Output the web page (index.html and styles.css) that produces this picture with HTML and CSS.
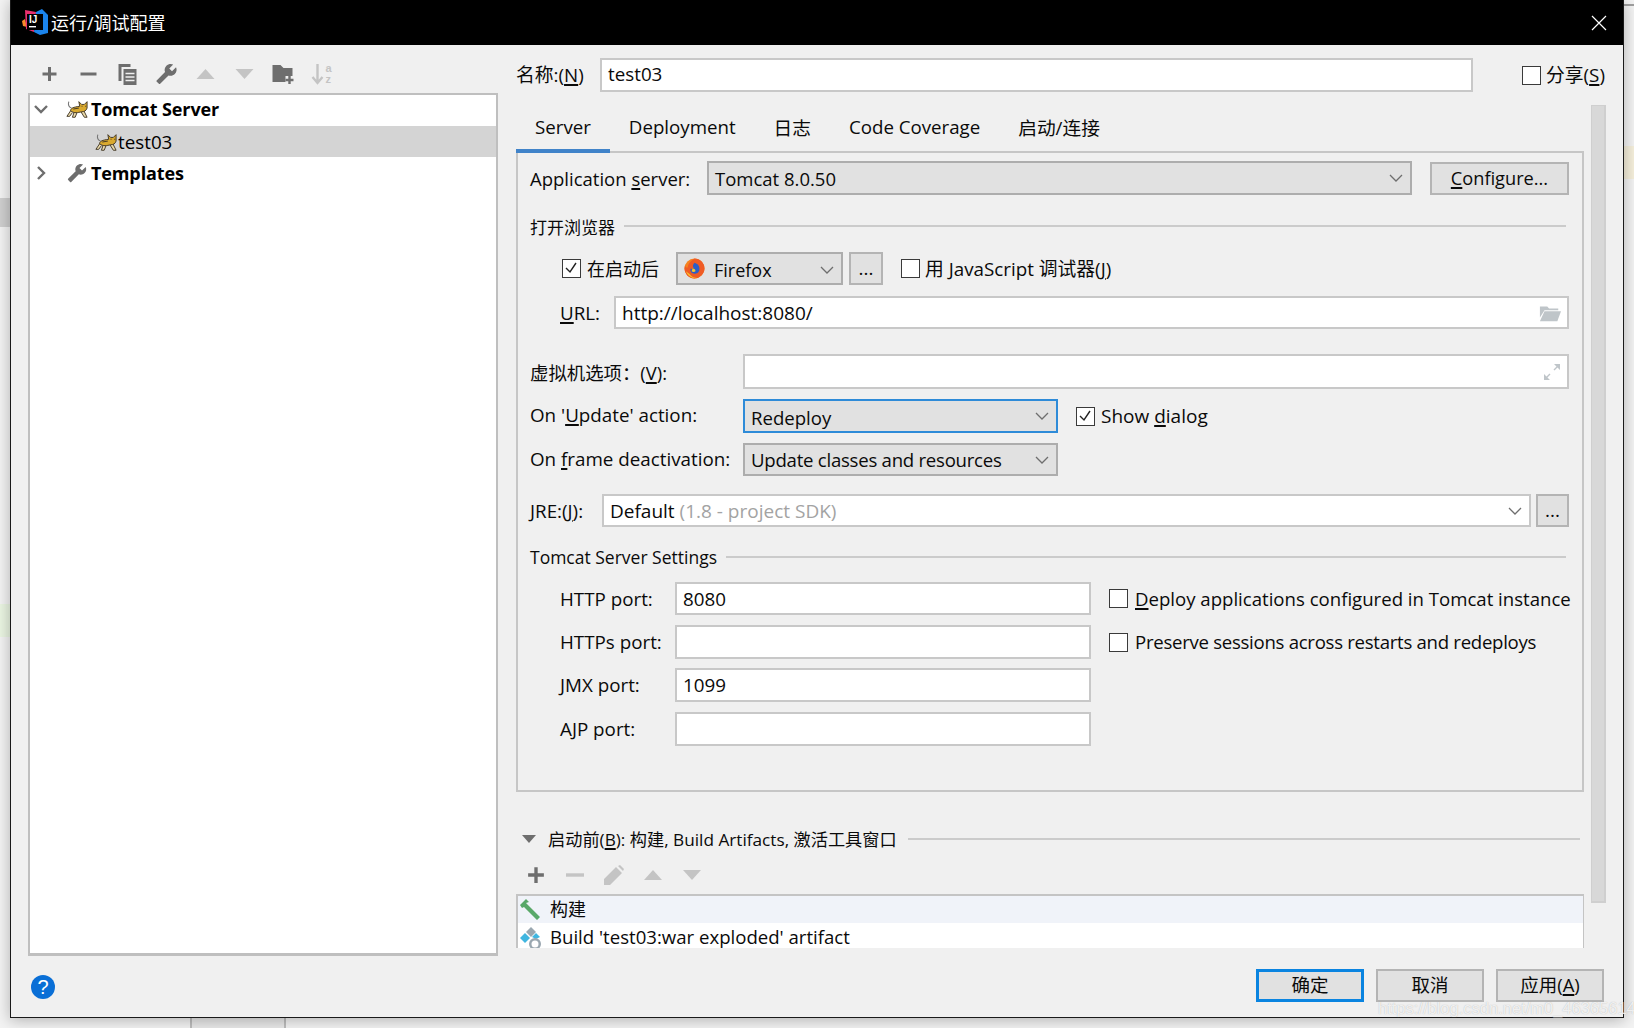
FILE: index.html
```html
<!DOCTYPE html>
<html lang="zh">
<head>
<meta charset="utf-8">
<title>运行/调试配置</title>
<link rel="stylesheet" href="styles.css">
</head>
<body>
<svg class="defs" width="0" height="0" aria-hidden="true">
  <defs>
    <symbol id="wrench" viewBox="0 0 24 24"><g transform="translate(24 0) scale(-1 1)"><path d="M22.7 19l-9.1-9.1c.9-2.3.4-5-1.5-6.9-2-2-5-2.4-7.4-1.3L9 6 6 9 1.6 4.7C.4 7.1.9 10.1 2.9 12.1c1.9 1.9 4.6 2.4 6.9 1.5l9.1 9.1c.4.4 1 .4 1.4 0l2.3-2.3c.5-.4.5-1.1.1-1.4z"/></g></symbol>
    <symbol id="tomcat" viewBox="0 0 24 20">
      <path d="M6 9C3 8 2 6 3 2" fill="none" stroke="#777" stroke-width="1.2"/>
      <path d="M5 12L1 18h3l3-4M9 13l-2 6h3l2-5" fill="#e9d9a8" stroke="#3d3222" stroke-width="1"/>
      <path d="M15 11l5 8h3l-4-8z" fill="#e9d9a8" stroke="#3d3222" stroke-width="1"/>
      <path d="M5 12c0-3 3-4 10-5l-1-5 3 3h3l3-3v7c-1 3-3 4-6 4-4 1-8 2-12-1z" fill="#d9a92e" stroke="#3d3222" stroke-width="1"/>
      <path d="M17 7h1M21 7h1M8 10l6-1" fill="none" stroke="#3d3222" stroke-width="1"/>
    </symbol>
  </defs>
</svg>

<div class="backdrop">
  <span class="bit bit-gray"></span>
  <span class="bit bit-green"></span>
  <span class="bit bit-yellow"></span>
  <span class="bit bit-line"></span>
  <span class="bit bit-tab"></span>
</div>

<main class="dialog">
  <header class="titlebar">
    <svg class="logo" viewBox="0 0 26 26" width="26" height="26">
      <path d="M0 12l3-2 2 8-4-1z" fill="#f98b2b"/>
      <path d="M3 1l11 2-2 20-8-3z" fill="#e8306f"/>
      <path d="M14 3l6-3 6 6v18l-8 2-6-3z" fill="#1b84ec"/>
      <rect x="5" y="5" width="16" height="16" fill="#000"/>
      <text x="7" y="14" class="logo-text">IJ</text>
      <rect x="7" y="17" width="7" height="1.4" fill="#fff"/>
    </svg>
    <span class="title">运行/调试配置</span>
    <svg class="close" viewBox="0 0 16 16" width="16" height="16"><path d="M1 1l14 14M15 1L1 15" stroke="#fff" stroke-width="1.2" fill="none"/></svg>
  </header>

  <div class="content">
    <aside class="sidebar">
      <div class="toolbar">
        <svg class="tool" viewBox="-3 -3 22 22"><path d="M8 1v14M1 8h14" stroke="#6e6e6e" stroke-width="3"/></svg>
        <svg class="tool" viewBox="-3 -3 22 22"><path d="M0 8h16" stroke="#6e6e6e" stroke-width="3"/></svg>
        <svg class="tool" viewBox="-1 -1 22 22"><path d="M1 0h12v3H4v14H1z" fill="#6e6e6e"/><path d="M6 5h13v16H6z" fill="#6e6e6e"/><path d="M8 9.5h9M8 13h9M8 16.5h9" stroke="#f0f0f0" stroke-width="1.5"/></svg>
        <svg class="tool" viewBox="0 0 24 24" fill="#6e6e6e"><use href="#wrench"/></svg>
        <svg class="tool" viewBox="-2 -6 22 22"><path d="M9 0l9 10H0z" fill="#c4c4c4"/></svg>
        <svg class="tool" viewBox="-2 -6 22 22"><path d="M0 0h18L9 10z" fill="#c4c4c4"/></svg>
        <svg class="tool" viewBox="0 0 22 22"><path d="M0 2h8l3 3h9v8h-7v6H0z" fill="#6e6e6e"/><path d="M17 13v8M13 17h8" stroke="#6e6e6e" stroke-width="2.4"/></svg>
        <svg class="tool" viewBox="0 0 22 22"><path d="M6 1v17M1 14l5 6 5-6" fill="none" stroke="#c4c4c4" stroke-width="2.4"/><text x="14" y="9" class="az">a</text><text x="14" y="20" class="az">z</text></svg>
      </div>
      <div class="tree">
        <div class="node node-top node-first">
          <svg class="twisty" viewBox="0 0 14 10"><path d="M1 2l6 6 6-6" fill="none" stroke="#6e6e6e" stroke-width="2.4"/></svg>
          <svg class="cat" viewBox="0 0 24 20"><use href="#tomcat"/></svg>
          <strong>Tomcat Server</strong>
        </div>
        <div class="node node-child">
          <svg class="cat" viewBox="0 0 24 20"><use href="#tomcat"/></svg>
          <span>test03</span>
        </div>
        <div class="node node-top">
          <svg class="twisty" viewBox="0 0 14 14"><path d="M4 1l6 6-6 6" fill="none" stroke="#6e6e6e" stroke-width="2.4"/></svg>
          <svg class="cat" viewBox="0 0 24 24" fill="#6e6e6e"><use href="#wrench"/></svg>
          <strong>Templates</strong>
        </div>
      </div>
    </aside>

    <section class="main">
      <div class="name-row">
        <label class="name-label">名称:(<u>N</u>)</label>
        <div class="field name-field"><span>test03</span></div>
        <span class="check share-check"></span>
        <span class="share-text">分享(<u>S</u>)</span>
      </div>

      <div class="scroll-wrap">
        <div class="scroll-body">
          <nav class="tabs">
            <span class="tab tab-active">Server</span>
            <span class="tab">Deployment</span>
            <span class="tab">日志</span>
            <span class="tab">Code Coverage</span>
            <span class="tab">启动/连接</span>
          </nav>

          <div class="panel">
            <div class="row row-appserver">
              <span class="lbl lbl-appserver">Application <u>s</u>erver:</span>
              <div class="combo combo-appserver"><span>Tomcat 8.0.50</span><svg class="chev" viewBox="0 0 14 8"><path d="M1 1l6 6 6-6" fill="none" stroke="#6e6e6e" stroke-width="1.3"/></svg></div>
              <div class="btn btn-config"><span><u>C</u>onfigure...</span></div>
            </div>

            <div class="group group-browser"><span>打开浏览器</span><i></i></div>

            <div class="row row-browser">
              <span class="check check-on first-check"><svg viewBox="0 0 16 16"><path d="M3 8l4 4 6-9" fill="none" stroke="#222" stroke-width="1.4"/></svg></span>
              <span class="after-start">在启动后</span>
              <div class="combo combo-browser">
                <svg class="firefox" viewBox="0 0 22 22"><circle cx="11" cy="11" r="10.5" fill="#f5821f"/><path d="M11 .5A10.5 10.5 0 0 1 21 14c-2 5-6 7.5-10 7.5A10.5 10.5 0 0 1 1 8c1 2 2 2 3 2 0-4 3-7 7-9.5z" fill="#ef5b25"/><path d="M11 5c3 1 6 3 5 8-1 3-4 4-7 3-2-1-3-3-2-5 2 1 3 0 3-1-1-1-1-3 1-5z" fill="#2b5ec8"/><path d="M2 14c2 5 7 8 12 7-3 0-6-1-8-4z" fill="#f9c52b"/><path d="M9 11c2 0 3 1 3 3-1 1-3 1-4 0z" fill="#f9c52b"/></svg>
                <span>Firefox</span>
                <svg class="chev" viewBox="0 0 14 8"><path d="M1 1l6 6 6-6" fill="none" stroke="#6e6e6e" stroke-width="1.3"/></svg>
              </div>
              <div class="btn btn-dots btn-browser-dots"><span>...</span></div>
              <span class="check js-check"></span>
              <span class="js-text">用 JavaScript 调试器(<u>J</u>)</span>
            </div>

            <div class="row row-url">
              <span class="lbl lbl-url"><u>U</u>RL:</span>
              <div class="field field-url"><span>http://localhost:8080/</span>
                <svg class="folder" viewBox="0 0 24 18"><path d="M1 2h8l2 2h10v2H6L1 14z" fill="#bfc5c9"/><path d="M6 7h18l-4 11H1z" fill="#bfc5c9"/></svg>
              </div>
            </div>

            <div class="row row-vm">
              <span class="lbl lbl-form lbl-vm">虚拟机选项：(<u>V</u>):</span>
              <div class="field field-vm">
                <svg class="expand" viewBox="0 0 18 18"><path d="M11 1h6v6zM1 11v6h6z" fill="#bfc5c9"/><path d="M15 3l-4 4M3 15l4-4" stroke="#bfc5c9" stroke-width="1.4"/></svg>
              </div>
            </div>

            <div class="row row-update">
              <span class="lbl lbl-form lbl-raise">On '<u>U</u>pdate' action:</span>
              <div class="combo combo-action combo-focus"><span class="combo-low">Redeploy</span><svg class="chev" viewBox="0 0 14 8"><path d="M1 1l6 6 6-6" fill="none" stroke="#6e6e6e" stroke-width="1.3"/></svg></div>
              <span class="check check-on dialog-check"><svg viewBox="0 0 16 16"><path d="M3 8l4 4 6-9" fill="none" stroke="#222" stroke-width="1.4"/></svg></span>
              <span class="dialog-text">Show <u>d</u>ialog</span>
            </div>

            <div class="row row-frame">
              <span class="lbl lbl-form lbl-raise">On <u>f</u>rame deactivation:</span>
              <div class="combo combo-action"><span class="combo-tight">Update classes and resources</span><svg class="chev" viewBox="0 0 14 8"><path d="M1 1l6 6 6-6" fill="none" stroke="#6e6e6e" stroke-width="1.3"/></svg></div>
            </div>

            <div class="row row-jre">
              <span class="lbl lbl-jre">JRE:(<u>J</u>):</span>
              <div class="field field-jre"><span>Default <em>(1.8 - project SDK)</em></span><svg class="chev" viewBox="0 0 14 8"><path d="M1 1l6 6 6-6" fill="none" stroke="#6e6e6e" stroke-width="1.3"/></svg></div>
              <div class="btn btn-dots btn-jre-dots"><span>...</span></div>
            </div>

            <div class="group group-tomcat"><span>Tomcat Server Settings</span><i></i></div>

            <div class="row row-port row-port-1">
              <span class="lbl lbl-port">HTTP port:</span>
              <div class="field field-port"><span>8080</span></div>
              <span class="check port-check"></span>
              <span class="port-text"><u>D</u>eploy applications configured in Tomcat instance</span>
            </div>
            <div class="row row-port row-port-2">
              <span class="lbl lbl-port">HTTPs port:</span>
              <div class="field field-port"></div>
              <span class="check port-check"></span>
              <span class="port-text port-text-tight">Preserve sessions across restarts and redeploys</span>
            </div>
            <div class="row row-port row-port-3">
              <span class="lbl lbl-port">JMX port:</span>
              <div class="field field-port"><span>1099</span></div>
            </div>
            <div class="row row-port row-port-4">
              <span class="lbl lbl-port">AJP port:</span>
              <div class="field field-port"></div>
            </div>
          </div>

          <div class="before-head">
            <svg class="before-tri" viewBox="0 0 14 8"><path d="M0 0h14L7 8z" fill="#6e6e6e"/></svg>
            <span>启动前(<u>B</u>): 构建, Build Artifacts, 激活工具窗口</span><i></i>
          </div>
          <div class="before-tools">
            <svg class="tool" viewBox="0 0 16 16"><path d="M8 1v14M1 8h14" stroke="#6e6e6e" stroke-width="3"/></svg>
            <svg class="tool" viewBox="0 0 16 16"><path d="M0 8h16" stroke="#c4c4c4" stroke-width="3"/></svg>
            <svg class="tool tool-pencil" viewBox="0 0 20 20"><path d="M0 20v-6L12 2l6 6L6 20zM14 1l2-1 4 4-1 2z" fill="#c4c4c4"/></svg>
            <svg class="tool" viewBox="0 0 18 10"><path d="M9 0l9 10H0z" fill="#c4c4c4"/></svg>
            <svg class="tool" viewBox="0 0 18 10"><path d="M0 0h18L9 10z" fill="#c4c4c4"/></svg>
          </div>
          <div class="task-list">
            <div class="task task-first">
              <svg class="task-icon" viewBox="0 0 22 22"><path d="M0 6l6-6 3 3-3 1 14 14-3 3L4 8 2 9z" fill="#59a869"/></svg>
              <span class="task-cjk">构建</span>
            </div>
            <div class="task">
              <svg class="task-icon task-clip" viewBox="0 0 22 24"><path d="M11 0l5 5-5 5-5-5z" fill="#9aa7b0"/><path d="M5 6l5 5-5 5-5-5z" fill="#40b6e0"/><path d="M16 6l4 4-4 2-4-2z" fill="#40b6e0"/><circle cx="15" cy="17" r="6" fill="#9aa7b0"/><circle cx="15" cy="17" r="3.5" fill="#fff"/></svg>
              <span>Build 'test03:war exploded' artifact</span>
            </div>
          </div>
        </div>
        <div class="scrollbar"></div>
      </div>
    </section>
  </div>

  <footer class="footer">
    <span class="help">?</span>
    <div class="actions">
      <div class="btn btn-act btn-ok"><span>确定</span></div>
      <div class="btn btn-act"><span>取消</span></div>
      <div class="btn btn-act"><span>应用(<u>A</u>)</span></div>
    </div>
  </footer>
</main>
<span class="watermark">https://blog.csdn.net/m0_46365614</span>
</body>
</html>
```
FILE: styles.css
```css
* { box-sizing: border-box; }
html, body { margin: 0; height: 100%; }
body {
  width: 1634px;
  height: 1028px;
  position: relative;
  overflow: hidden;
  background: #f3f3f3;
  color: #0a0a0a;
  font-family: "Open Sans", "Noto Sans CJK SC", sans-serif;
  font-size: 18.8px;
}
u { text-underline-offset: 2px; text-decoration-thickness: 1.5px; }
em { font-style: normal; color: #a3a3a3; }
.defs { position: absolute; }

/* what shows behind the dialog */
.bit { position: absolute; }
.bit-gray { left: 0; top: 198px; width: 10px; height: 29px; background: #cfcfcf; }
.bit-green { left: 0; top: 604px; width: 10px; height: 33px; background: #eaf5e2; }
.bit-yellow { left: 1624px; top: 146px; width: 10px; height: 33px; background: #f5efdb; }
.bit-line { left: 1624px; top: 4px; width: 10px; height: 2px; background: #a0a0a0; }
.bit-tab { left: 190px; top: 1018px; width: 96px; height: 10px; background: #e8e8e8; border-left: 2px solid #bdbdbd; border-right: 2px solid #bdbdbd; }

.dialog {
  position: absolute;
  left: 10px;
  top: 0;
  width: 1614px;
  height: 1018px;
  background: #f0f0f0;
  border: 1px solid #1a1a1a;
  border-top: 0;
  box-shadow: 0 2px 14px rgba(0, 0, 0, .28);
  display: flex;
  flex-direction: column;
}

.titlebar {
  height: 45px;
  flex: none;
  background: #000;
  color: #fff;
  display: flex;
  align-items: center;
  padding: 0 16px 0 11px;
  font-size: 18px;
}
.logo { flex: none; margin-top: -1px; }
.logo-text { font: bold 10px "Liberation Sans", sans-serif; fill: #fff; }
.title { margin-left: 3px; padding-bottom: 2px; }
.close { margin-left: auto; }

.content { display: flex; flex: 1; min-height: 0; }
.sidebar { width: 487px; flex: none; padding-left: 17px; }
.tool { width: 18px; height: 18px; flex: none; }
.toolbar { height: 48px; display: flex; align-items: center; padding: 10px 0 0 2px; }
.toolbar .tool { width: 39px; height: 22px; }
.az { font: bold 11px "Liberation Sans", sans-serif; fill: #c4c4c4; }

.tree {
  width: 470px;
  height: 863px;
  background: #fff;
  border: 2px solid #bfbfbf;
  border-bottom-width: 3px;
}
.node { height: 31px; display: flex; align-items: center; color: #000; }
.node-first { padding-bottom: 3px; }
.node-child { background: #d4d4d4; padding-left: 65px; }
.node-child span { margin-left: 1px; }
.node strong { font-weight: 700; font-size: 18px; letter-spacing: -.12px; }
.twisty { width: 14px; height: 14px; flex: none; margin-left: 4px; }
.node-top .cat { width: 22px; height: 20px; flex: none; margin-left: 18px; margin-right: 3px; }
.node-child .cat { width: 22px; height: 20px; flex: none; }

.main { flex: 1; min-width: 0; padding-left: 18px; }
.name-row { height: 34px; margin-top: 13px; display: flex; align-items: center; }
.name-row > label, .name-row > .share-text, .name-field span { padding-bottom: 2px; }
.name-label { width: 84px; flex: none; }
.field {
  background: #fff;
  border: 2px solid #c8c8c8;
  display: flex;
  align-items: center;
  padding-left: 6px;
  flex: none;
}
.name-field { width: 873px; height: 34px; }
.check {
  width: 19px;
  height: 19px;
  border: 1.5px solid #3a3a3a;
  background: #fff;
  flex: none;
  display: block;
}
.check svg { display: block; width: 16px; height: 16px; }
.share-check { margin-left: 49px; }
.share-text { margin-left: 5px; }

.scroll-wrap { display: flex; height: 842px; }
.scroll-body { width: 1068px; flex: none; }
.scrollbar {
  width: 15px;
  height: 798px;
  margin: 13px 0 0 7px;
  background: #d8d8d8;
  border: 1px solid #cfcfcf;
  border-right-width: 2px;
  border-bottom-width: 2px;
  flex: none;
}

.tabs { height: 47px; margin-top: 14px; margin-bottom: -2px; display: flex; position: relative; font-size: 18.7px; }
.tab { padding: 0 19px 6px; display: flex; align-items: center; height: 47px; }
.tab-active { border-bottom: 4px solid #4083c9; padding-bottom: 2px; }

.panel {
  height: 641px;
  border: 2px solid #c6c6c6;
  padding: 8px 13px 0 12px;
}
.row { display: flex; align-items: center; }
.lbl { flex: none; }
.combo {
  display: flex;
  align-items: center;
  background: #e1e1e1;
  border: 2px solid #adadad;
  padding-left: 6px;
  flex: none;
}
.chev { width: 14px; height: 8px; margin-left: auto; margin-right: 7px; flex: none; }
.btn {
  background: #e1e1e1;
  border: 2px solid #b4b4b4;
  display: flex;
  align-items: center;
  justify-content: center;
  flex: none;
}

.row-appserver { height: 34px; }
.lbl-appserver { width: 177px; font-size: 18.5px; }
.combo-appserver { width: 705px; height: 34px; font-size: 18.5px; }
.btn-config { width: 139px; height: 33px; margin-left: 18px; font-size: 18.2px; }

.group { display: flex; align-items: center; height: 20px; font-size: 17px; }
.group i { flex: 1; height: 2px; background: #cbcbcb; margin-left: 9px; margin-right: 3px; }
.group-browser { margin-top: 21px; }
.group-tomcat { margin-top: 20px; font-size: 17.5px; }

.row-browser { height: 33px; margin-top: 16px; }
.first-check { margin-left: 32px; }
.after-start { margin-left: 6px; width: 89px; flex: none; font-size: 18px; padding-bottom: 2px; }
.combo-browser { width: 167px; height: 33px; font-size: 18px; padding-top: 2px; }
.firefox { width: 21px; height: 21px; margin: -2px 9px 0 0; flex: none; }
.btn-dots { height: 33px; padding-bottom: 2px; }
.btn-browser-dots { width: 34px; margin-left: 6px; }
.js-check { margin-left: 18px; }
.js-text { margin-left: 5px; font-size: 18.8px; padding-bottom: 2px; }

.row-url { height: 33px; margin-top: 11px; }
.lbl-url { width: 54px; margin-left: 30px; }
.field-url { width: 955px; height: 33px; font-size: 19px; }
.folder { width: 22px; height: 18px; margin-left: auto; margin-right: 6px; flex: none; }

.row-vm { height: 35px; margin-top: 25px; }
.lbl-form { width: 213px; }
.lbl-vm { font-size: 18.4px; }
.lbl-raise { padding-bottom: 2px; }
.field-vm { width: 826px; height: 35px; }
.expand { width: 18px; height: 18px; margin-left: auto; margin-right: 6px; }

.row-update { height: 34px; margin-top: 10px; }
.row-frame { height: 33px; margin-top: 10px; }
.combo-action { width: 315px; height: 100%; font-size: 18.6px; }
.combo-low { padding-top: 3px; }
.combo-tight { letter-spacing: -.25px; }
.combo-focus { border-color: #2e8bd8; }
.dialog-check { margin-left: 18px; }
.dialog-text { margin-left: 6px; font-size: 19px; }

.row-jre { height: 33px; margin-top: 18px; }
.lbl-jre { width: 72px; }
.field-jre { width: 929px; height: 33px; font-size: 19px; }
.btn-jre-dots { width: 33px; margin-left: 5px; }

.row-port { height: 33px; }
.row-port-1 { margin-top: 15px; }
.row-port-2 { margin-top: 10px; height: 34px; }
.row-port-3 { margin-top: 9px; height: 34px; }
.row-port-4 { margin-top: 10px; height: 34px; }
.lbl-port { width: 115px; margin-left: 30px; }
.field-port { width: 416px; height: 100%; }
.port-check { margin-left: 18px; }
.port-text { margin-left: 7px; white-space: nowrap; font-size: 18.6px; }
.port-text-tight { letter-spacing: -.28px; padding-bottom: 1px; }

.before-head { display: flex; align-items: center; height: 20px; margin-top: 37px; font-size: 17.2px; }
.before-head span { padding-bottom: 2px; }
.before-tri { width: 14px; height: 8px; margin-left: 6px; margin-right: 12px; flex: none; }
.before-head i { flex: 1; height: 2px; background: #cbcbcb; margin-left: 11px; margin-right: 4px; }
.before-tools { height: 20px; margin-top: 16px; display: flex; align-items: center; padding-left: 11px; }
.before-tools .tool { margin-right: 21px; }
.before-tools .tool-pencil { width: 20px; height: 20px; margin: 0 20px 0 -1px; }
.task-list {
  height: 54px;
  margin-top: 9px;
  background: #fff;
  border: 2px solid #c4c4c4;
  border-bottom: 0;
  border-right-width: 1px;
  overflow: hidden;
}
.task { height: 27px; display: flex; align-items: center; font-size: 18.6px; }
.task-first { background: #f0f3f9; }
.task-cjk { font-size: 18px; padding-bottom: 3px; }
.task-icon { width: 22px; height: 22px; flex: none; margin: 0 8px 0 2px; }
.task-clip { height: 24px; margin-top: 4px; }

.footer { height: 62px; flex: none; display: flex; align-items: flex-start; padding-left: 20px; }
.help {
  width: 24px;
  height: 24px;
  border-radius: 50%;
  background: #0a6fd6;
  color: #fff;
  font: 20px/24px "Liberation Sans", sans-serif;
  text-align: center;
  margin-top: 20px;
}
.actions { display: flex; gap: 12px; margin-left: auto; margin-top: 14px; margin-right: 19px; }
.btn-act { width: 108px; height: 33px; font-size: 18.5px; padding-bottom: 3px; }
.btn-ok { border: 3px solid #0a84e0; }

.watermark {
  position: absolute;
  left: 1378px;
  top: 999px;
  font: 16.5px "Liberation Sans", sans-serif;
  color: rgba(255, 255, 255, .8);
  text-shadow: 0 0 1px rgba(150, 150, 150, .7);
  white-space: nowrap;
}
```
